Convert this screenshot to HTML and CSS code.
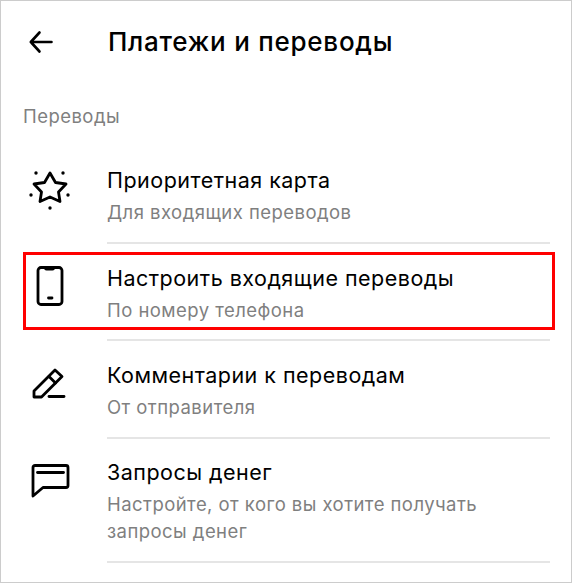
FILE: index.html
```html
<!DOCTYPE html>
<html lang="ru">
<head>
    <meta charset="UTF-8">
    <meta name="viewport" content="width=device-width, initial-scale=1.0">
    <title>Платежи и переводы</title>
    <link rel="stylesheet" href="styles.css">
</head>
<body>
    <div class="screen">
        <div class="header">
            <svg class="back" width="24" height="24" viewBox="0 0 24 24" fill="none" stroke="#000" stroke-width="2.6" stroke-linecap="round" stroke-linejoin="round">
                <path d="M22.5 12H1.800M10.500 2.500 1.800 12l8.700 9.500"/>
            </svg>
            <div class="title">Платежи и переводы</div>
        </div>

        <div class="section">Переводы</div>

        <div class="row">
            <div class="icon">
                <svg width="50" height="50" viewBox="0 0 50 50" fill="none" stroke="#000" stroke-width="2.8" stroke-linejoin="round">
                    <path d="M27 7 32.500 16.500 43 18l-7.500 8 1.500 9.500-10-4.500-10 4.500 1.500-9.500-7.500-8 10.500-1.500z"/>
                    <g fill="#000" stroke="none">
                        <circle cx="13" cy="7" r="1.700"/>
                        <circle cx="40" cy="7" r="1.700"/>
                        <circle cx="8" cy="29" r="1.700"/>
                        <circle cx="45" cy="29" r="1.700"/>
                        <circle cx="27" cy="42" r="1.700"/>
                    </g>
                </svg>
            </div>
            <div class="text">
                <div class="name">Приоритетная карта</div>
                <div class="hint">Для входящих переводов</div>
            </div>
        </div>

        <div class="row">
            <div class="icon">
                <svg width="50" height="50" viewBox="0 0 50 50" fill="none" stroke="#000" stroke-width="2.8" stroke-linejoin="round">
                    <rect x="15" y="3.500" width="24" height="37" rx="3"/>
                    <path d="M21 3.500c0 2 .800 3 2.500 3h6c1.700 0 2.500-1 2.500-3z" fill="#000" stroke="none"/>
                    <path d="M25.500 34h3.500" stroke-linecap="round"/>
                </svg>
            </div>
            <div class="text">
                <div class="name">Настроить входящие переводы</div>
                <div class="hint">По номеру телефона</div>
            </div>
            <div class="highlight"></div>
        </div>

        <div class="row">
            <div class="icon">
                <svg width="50" height="50" viewBox="0 0 50 50" fill="none" stroke="#000" stroke-width="2.800" stroke-linejoin="round" stroke-linecap="round">
                    <path d="M11 36v-6L32 9l7 6.500L18.500 36z"/>
                    <path d="M26 15.500l6.500 6.500"/>
                    <path d="M26 35.500h15"/>
                </svg>
            </div>
            <div class="text">
                <div class="name">Комментарии к переводам</div>
                <div class="hint">От отправителя</div>
            </div>
        </div>

        <div class="row tall">
            <div class="icon">
                <svg width="50" height="50" viewBox="0 0 50 50" fill="none" stroke="#000" stroke-width="2.800" stroke-linejoin="round" stroke-linecap="round">
                    <path d="M10 8.500a2 2 0 0 1 2-2h31a2 2 0 0 1 2 2v18a2 2 0 0 1-2 2H20l-10 8.500z"/>
                    <path d="M14.500 13.500h26"/>
                </svg>
            </div>
            <div class="text">
                <div class="name">Запросы денег</div>
                <div class="hint">Настройте, от кого вы хотите получать<br>запросы денег</div>
            </div>
        </div>
    </div>
</body>
</html>
```

FILE: styles.css
```css
* {
    box-sizing: border-box;
}
body {
    margin: 0;
    font-family: Inter, "Noto Sans", Arial, sans-serif;
    background-color: #fff;
}
.screen {
    width: 572px;
    height: 583px;
    border: 1px solid #ccc;
    padding-left: 22px;
    background-color: #fff;
}
.header {
    display: flex;
    align-items: center;
    height: 81px;
}
.back {
    margin: 0 0 0 6px;
}
.title {
    margin-left: 55px;
    font-size: 26px;
    font-weight: 500;
    letter-spacing: 0.75px;
    color: #000;
}
.section {
    margin-top: 21px;
    height: 43px;
    font-size: 18.5px;
    line-height: 26px;
    letter-spacing: 0.45px;
    color: #7f7f7f;
}
.row {
    position: relative;
    display: flex;
    height: 97.5px;
}
.row.tall {
    height: 124px;
}
.icon {
    width: 84px;
    padding-top: 20px;
}
.text {
    flex: 1;
    margin-right: 21px;
    padding-top: 20px;
    border-bottom: 2px solid #e5e5e5;
}
.row.tall .text {
    padding-top: 19px;
}
.name {
    font-size: 21.5px;
    line-height: 28px;
    letter-spacing: 0.48px;
    color: #000;
}
.hint {
    margin-top: 5px;
    font-size: 18.5px;
    line-height: 26px;
    letter-spacing: 0.45px;
    color: #7f7f7f;
}
.row.tall .hint {
    line-height: 27px;
}
.highlight {
    position: absolute;
    left: 0;
    right: 16px;
    top: 8.5px;
    height: 78px;
    border: 3px solid #f00;
}
```
